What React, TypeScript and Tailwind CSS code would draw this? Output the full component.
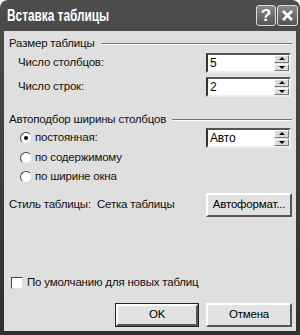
import React from 'react';

const font = { fontFamily: '"Liberation Sans", Arial, sans-serif' };

function Spin({ value }: { value: string }) {
  return (
    <div className="w-[85px] h-[20px] flex bg-white border-2 border-t-[#555] border-l-[#333] border-b-[#eee] border-r-[#eee]">
      <div className="flex-1 pl-[2px] text-[12px] leading-[16px] text-black">{value}</div>
      <div className="w-[15px] flex flex-col gap-[1px] bg-[#e6e6e6]">
        <div className="flex-1 flex items-center justify-center border border-t-white border-l-white border-b-[#777] border-r-[#777] bg-[#dcdcdc]">
          <div className="w-0 h-0 border-l-[3px] border-r-[3px] border-b-[3px] border-l-transparent border-r-transparent border-b-black" />
        </div>
        <div className="flex-1 flex items-center justify-center border border-t-white border-l-white border-b-[#777] border-r-[#777] bg-[#dcdcdc]">
          <div className="w-0 h-0 border-l-[3px] border-r-[3px] border-t-[3px] border-l-transparent border-r-transparent border-t-black" />
        </div>
      </div>
    </div>
  );
}

function Radio({ checked, label }: { checked?: boolean; label: string }) {
  return (
    <div className="flex items-center gap-[3px]">
      <div className="w-[12px] h-[12px] rounded-full bg-white border border-t-[#444] border-l-[#444] border-b-[#ddd] border-r-[#ddd] flex items-center justify-center">
        {checked && <div className="w-[4px] h-[4px] rounded-full bg-black" />}
      </div>
      <span>{label}</span>
    </div>
  );
}

function Btn({ label, def }: { label: string; def?: boolean }) {
  return (
    <div className={def ? 'border border-[#222]' : ''}>
      <div
        className={`${def ? 'w-[82px] h-[22px]' : 'w-[86px] h-[24px]'} flex items-center justify-center bg-[#e2e2e2] border-2 border-t-white border-l-white border-b-[#555] border-r-[#555] text-black whitespace-nowrap`}
      >
        {label}
      </div>
    </div>
  );
}

function Legend({ label }: { label: string }) {
  return (
    <div className="h-[16px] flex items-center gap-[6px] pr-[4px]">
      <span className="whitespace-nowrap">{label}</span>
      <div className="flex-1 h-[2px] border-t border-t-[#777] border-b border-b-white" />
    </div>
  );
}

export default function App() {
  return (
    <div className="w-[300px] h-[335px] bg-white" style={font}>
      <div className="w-[300px] h-[335px] flex flex-col rounded-t-[8px] bg-gradient-to-b from-[#4d4d4d] to-[#2f2f2f] px-[4px] pb-[4px]">
        {/* Title bar */}
        <div className="h-[31px] flex items-center justify-between pl-[3px]">
          <span className="text-white font-bold text-[16px] whitespace-nowrap origin-left scale-x-[0.74]">Вставка таблицы</span>
          <div className="flex gap-[1px] -mr-[2px]">
            <div className="w-[20px] h-[21px] rounded-[3px] border border-[#ddd] bg-gradient-to-b from-[#8a8a8a] to-[#555] flex items-center justify-center text-white font-bold text-[17px]">
              ?
            </div>
            <div className="w-[21px] h-[21px] rounded-[3px] border border-[#ddd] bg-gradient-to-b from-[#8a8a8a] to-[#555] flex items-center justify-center">
              <svg width="13" height="13" viewBox="0 0 13 13">
                <path d="M2 2 L11 11 M11 2 L2 11" stroke="white" strokeWidth="2.6" />
              </svg>
            </div>
          </div>
        </div>

        {/* Body */}
        <div className="flex-1 flex flex-col bg-[#dfdfdf] text-[11.5px] tracking-[-0.2px] text-[#111] pl-[5px]">
          <div className="mt-[5px]">
            <Legend label="Размер таблицы" />
          </div>
          <div className="mt-[1px] flex flex-col gap-[4px] pl-[9px] pr-[5px]">
            <div className="flex items-center justify-between">
              <span>Число столбцов:</span>
              <Spin value="5" />
            </div>
            <div className="flex items-center justify-between">
              <span>Число строк:</span>
              <Spin value="2" />
            </div>
          </div>

          <div className="mt-[15px]">
            <Legend label="Автоподбор ширины столбцов" />
          </div>
          <div className="pl-[11px] pr-[5px] flex flex-col">
            <div className="h-[20px] flex items-center justify-between">
              <Radio checked label="постоянная:" />
              <Spin value="Авто" />
            </div>
            <div className="h-[19px] flex items-center">
              <Radio label="по содержимому" />
            </div>
            <div className="h-[20px] flex items-center">
              <Radio label="по ширине окна" />
            </div>
          </div>

          <div className="mt-[6px] flex items-center pr-[4px]">
            <span className="w-[88px] whitespace-nowrap">Стиль таблицы:</span>
            <span className="flex-1 whitespace-nowrap">Сетка таблицы</span>
            <Btn label="Автоформат..." />
          </div>

          <div className="mt-[59px] h-[14px] flex items-center gap-[4px] pl-[2px]">
            <div className="w-[12px] h-[12px] bg-white border border-t-[#444] border-l-[#444] border-b-[#ddd] border-r-[#ddd]" />
            <span>По умолчанию для новых таблиц</span>
          </div>

          <div className="mt-[13px] flex justify-end gap-[7px] pr-[4px]">
            <Btn label="OK" def />
            <Btn label="Отмена" />
          </div>
        </div>
      </div>
    </div>
  );
}
